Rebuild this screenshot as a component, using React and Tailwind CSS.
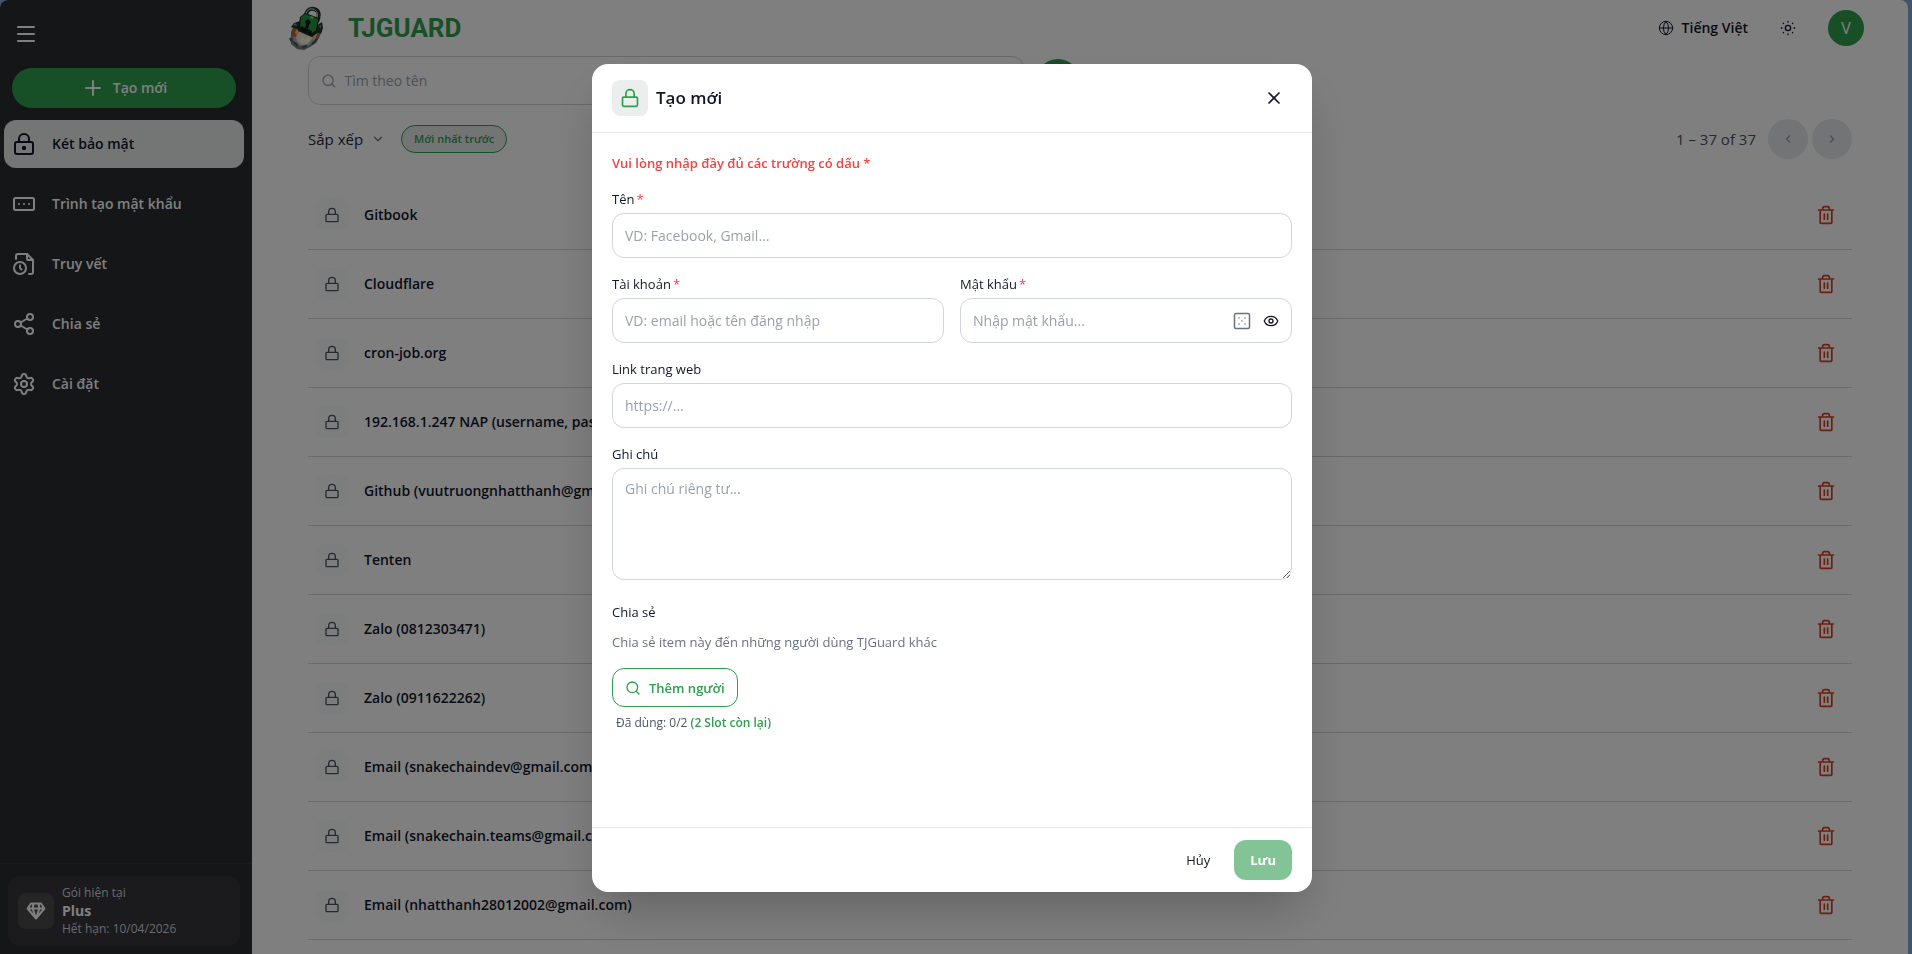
import { useState } from 'react'
import {
  ChevronDown,
  ChevronLeft,
  ChevronRight,
  Eye,
  Globe,
  Menu,
  Plus,
  Search,
  Settings,
  X,
} from 'lucide-react'

const ITEMS = [
  'Gitbook',
  'Cloudflare',
  'cron-job.org',
  '192.168.1.247 NAP (username, password)',
  'Github (vuutruongnhatthanh@gmail.com)',
  'Tenten',
  'Zalo (0812303471)',
  'Zalo (0911622262)',
  'Email (snakechaindev@gmail.com)',
  'Email (snakechain.teams@gmail.com)',
  'Email (nhatthanh28012002@gmail.com)',
]

const NAV = [
  { label: 'Két bảo mật', icon: VaultIcon, active: true },
  { label: 'Trình tạo mật khẩu', icon: PasswordIcon },
  { label: 'Truy vết', icon: HistoryIcon },
  { label: 'Chia sẻ', icon: ShareIcon },
  { label: 'Cài đặt', icon: Settings },
]

function Icon({ size = 24, stroke = 2, className, children }) {
  return (
    <svg
      width={size}
      height={size}
      viewBox="0 0 24 24"
      fill="none"
      stroke="currentColor"
      strokeWidth={stroke}
      strokeLinecap="round"
      strokeLinejoin="round"
      className={className}
      aria-hidden="true"
    >
      {children}
    </svg>
  )
}

function VaultIcon() {
  return (
    <Icon>
      <rect x="3" y="10" width="18" height="12" rx="2" />
      <path d="M7 10V7a5 5 0 0 1 10 0v3" />
      <circle cx="12" cy="16" r="1.2" fill="currentColor" />
    </Icon>
  )
}

function PasswordIcon() {
  return (
    <Icon>
      <rect x="2" y="6" width="20" height="12" rx="1.5" />
      <path d="M7 12h.01M12 12h.01M17 12h.01" />
    </Icon>
  )
}

function HistoryIcon() {
  return (
    <Icon>
      <path d="M4 7V4a2 2 0 0 1 2-2h9l6 6v12a2 2 0 0 1-2 2h-2" />
      <path d="M15 2v5a1 1 0 0 0 1 1h5" />
      <circle cx="8" cy="16" r="6" />
      <path d="M8 13.500V16l1.500 1.500" />
    </Icon>
  )
}

function ShareIcon() {
  return (
    <Icon>
      <circle cx="18" cy="5" r="3" />
      <circle cx="6" cy="12" r="3" />
      <circle cx="18" cy="19" r="3" />
      <path d="m8.600 13.500 6.800 4M15.400 6.500l-6.800 4" />
    </Icon>
  )
}

function LockIcon({ size = 18, stroke = 2 }) {
  return (
    <Icon size={size} stroke={stroke}>
      <rect x="3" y="11" width="18" height="11" rx="1.5" />
      <path d="M7 11V7a5 5 0 0 1 10 0v4" />
    </Icon>
  )
}

function TrashIcon() {
  return (
    <Icon size={20}>
      <path d="M3 6h18M5 6v15a1 1 0 0 0 1 1h12a1 1 0 0 0 1-1V6M8 6V4a2 2 0 0 1 2-2h4a2 2 0 0 1 2 2v2M10 11v6M14 11v6" />
    </Icon>
  )
}

function SunIcon() {
  return (
    <Icon size={16}>
      <circle cx="12" cy="12" r="4" />
      <path d="M12 2v1M12 21v1M2 12h1M21 12h1M4.900 4.900l.5.5M18.600 18.600l.5.5M4.900 19.100l.5-.5M18.600 5.400l.5-.5" />
    </Icon>
  )
}

function DiceIcon() {
  return (
    <Icon size={18}>
      <rect x="2" y="2" width="20" height="20" rx="2" />
      <path d="M8 8h.01M16 8h.01M12 12h.01M8 16h.01M16 16h.01" />
    </Icon>
  )
}

function DiamondIcon() {
  return (
    <Icon size={20} stroke={2.5}>
      <path d="M6 3h12l4 6-10 12L2 9zM2 9h20M9 3 8 9l4 12 4-12-1-6" />
    </Icon>
  )
}

function Logo() {
  return (
    <svg width="36" height="44" viewBox="0 0 36 44" aria-hidden="true">
      <path d="M3 26 6 19l7-3 16 5 5 3-3 8-3 5-6 4-6 3-7-1-6-5z" fill="#6f7d80" />
      <path d="m5 29 3-8 6 1 13 7 4-3-4 9-8 6-9-1-4-4z" fill="#a8b1ad" />
      <path d="m8 30 4-5 4 3 5 2 4 2-5 6-7 1-4-4z" fill="#e8e3cc" />
      <path d="m4 30 3-11 4 3-3 9zM26 33l4-10 3 1-5 10z" fill="#d05a25" />
      <path d="m7 27 2-5 3 3-3 5zM24 33l3-6 2 1-2 6z" fill="#f4b27a" />
      <path d="m12 35 3-6 2 5 4-4 1 5-5 3z" fill="#f8f4df" />
      <path d="m6 36 4 4M14 41l5-1M24 38l5-5M2 32l2 4" stroke="#4a5654" strokeWidth="2" />
      <path d="m3 21 3-4 6-2-1 9-5-2zM28 20l6-4 1 6-2 6-5-2z" fill="#25342f" />
      <path d="m5 19 3-2 1 3zM31 20l2-1v4z" fill="#7d8f88" />
      <path d="M18 14c-1-9 3-12 8-11s6 6 3 13" fill="none" stroke="#26332f" strokeWidth="4" />
      <path d="M18 13c-1-8 3-11 7-10s6 6 3 12" fill="none" stroke="#dce2e2" strokeWidth="1" />
      <path d="m12 11 5-4 14 5-2 15-5 4-14-6z" fill="#16291f" />
      <path d="m13 11 4-3 13 5-2 11-4 3-12-5z" fill="#259745" />
      <path d="m17 15 3-2 3 3-2 3-1 4-3-1 1-4z" fill="#151a1a" />
      <path d="m12 23 11 6 1-4-11-5z" fill="#121a18" />
      <path d="m23 10 3 1-1 2-3-1z" fill="#6fdd66" />
    </svg>
  )
}

function Sidebar() {
  return (
    <aside className="flex w-[252px] shrink-0 flex-col bg-[#2b2c2f] text-white">
      <div className="flex flex-col pt-6 pr-4 pl-3">
        <button type="button" aria-label="Menu" className="flex h-5 w-7 items-center justify-center">
          <Menu size={24} />
        </button>
        <button
          type="button"
          className="mt-6 flex h-10 items-center justify-center gap-2 rounded-full bg-[#2f9e4f] text-sm font-semibold"
        >
          <Plus size={24} />
          Tạo mới
        </button>
      </div>
      <nav className="mt-3 flex flex-col gap-3 pr-2 pl-1">
        {NAV.map(({ label, icon: NavIcon, active }) => (
          <a
            key={label}
            href="#"
            className={
              active
                ? 'flex h-12 items-center gap-4 rounded-xl bg-[#e8ecec] px-2 text-sm font-semibold text-slate-900'
                : 'flex h-12 items-center gap-4 rounded-xl px-2 text-sm font-semibold'
            }
          >
            <NavIcon />
            {label}
          </a>
        ))}
      </nav>
      <div className="mt-auto border-t border-white/5 pt-3 pr-3 pb-2 pl-2">
        <div className="flex h-[70px] items-center gap-2 rounded-xl bg-[#363438] px-2.5">
          <span className="flex size-9 items-center justify-center rounded-lg bg-[#4a4a4c]">
            <DiamondIcon />
          </span>
          <div className="text-xs/[18px] text-gray-300">
            <p>Gói hiện tại</p>
            <p className="text-sm/[18px] font-bold text-white">Plus</p>
            <p>Hết hạn: 10/04/2026</p>
          </div>
        </div>
      </div>
    </aside>
  )
}

function Header() {
  return (
    <header className="flex h-14 shrink-0 items-center justify-between pr-11 pl-9">
      <div className="flex items-center gap-6">
        <Logo />
        <span className="font-[Roboto] text-[26px] font-bold text-[#2f9e4f]">TJGUARD</span>
      </div>
      <div className="flex items-center gap-8 text-slate-900">
        <button type="button" className="flex items-center gap-2 text-sm font-semibold">
          <Globe size={16} strokeWidth={1.5} />
          Tiếng Việt
        </button>
        <button type="button" aria-label="Giao diện">
          <SunIcon />
        </button>
        <button
          type="button"
          className="flex size-9 items-center justify-center rounded-full bg-[#2f9e4f] text-base text-white"
        >
          V
        </button>
      </div>
    </header>
  )
}

function Vault() {
  return (
    <main className="px-14">
      <div className="flex items-center gap-3">
        <label className="flex h-[49px] w-[716px] items-center gap-2 rounded-xl border border-gray-300 px-3 text-gray-400">
          <Search size={16} />
          <input
            type="text"
            aria-label="Tìm theo tên"
            placeholder="Tìm theo tên"
            className="w-full text-sm outline-none placeholder:text-gray-400"
          />
        </label>
        <button
          type="button"
          aria-label="Tìm kiếm"
          className="flex size-11 items-center justify-center rounded-full bg-[#2f9e4f] text-white"
        >
          <Search size={18} />
        </button>
      </div>

      <div className="mt-3 flex h-11 items-center justify-between">
        <div className="flex items-center gap-4">
          <button type="button" className="flex items-center gap-2 text-[15px] text-gray-800">
            Sắp xếp
            <ChevronDown size={14} className="text-gray-500" />
          </button>
          <button
            type="button"
            className="h-7 rounded-full border border-[#2f9e4f] bg-[#e6ebe9] px-3 text-[11px] font-semibold text-[#2f9e4f]"
          >
            Mới nhất trước
          </button>
        </div>
        <div className="flex items-center gap-1">
          <span className="mr-2 text-[15px] text-gray-600">1 – 37 of 37</span>
          <button
            type="button"
            aria-label="Trang trước"
            className="flex size-10 items-center justify-center rounded-full bg-[#e6e9ea] text-gray-400"
          >
            <ChevronLeft size={12} strokeWidth={3} />
          </button>
          <button
            type="button"
            aria-label="Trang sau"
            className="flex size-10 items-center justify-center rounded-full bg-[#e6e9ea] text-gray-400"
          >
            <ChevronRight size={12} strokeWidth={3} />
          </button>
        </div>
      </div>

      <ul className="mt-5">
        {ITEMS.map((name) => (
          <li key={name} className="flex h-[69px] items-center border-b border-gray-300 px-2">
            <span className="flex size-8 items-center justify-center rounded-lg bg-[#f9fafb] text-gray-600">
              <LockIcon size={16} />
            </span>
            <a href="#" className="ml-4 grow text-sm font-semibold text-slate-900">
              {name}
            </a>
            <button type="button" aria-label={`Xóa ${name}`} className="mr-2 text-[#d63f20]">
              <TrashIcon />
            </button>
          </li>
        ))}
      </ul>
    </main>
  )
}

const inputClass =
  'h-[45px] w-full rounded-xl border border-gray-300 px-3 text-sm text-gray-900 outline-none placeholder:text-gray-400'

function Field({ id, label, required, children }) {
  return (
    <div className="flex flex-col gap-1">
      <label htmlFor={id} className="text-[13px]/5 text-gray-900">
        {label}
        {required && <span className="ml-0.5 text-[#ef4444]">*</span>}
      </label>
      {children}
    </div>
  )
}

function CreateModal({ onClose }) {
  const [form, setForm] = useState({ name: '', account: '', password: '', link: '', note: '' })
  const [visible, setVisible] = useState(false)

  const update = (field) => (e) => setForm((f) => ({ ...f, [field]: e.target.value }))

  return (
    <div className="fixed inset-0 flex items-center justify-center bg-black/50 pt-0.5 pr-2">
      <form
        role="dialog"
        aria-label="Tạo mới"
        onSubmit={(e) => e.preventDefault()}
        className="flex h-[828px] w-[720px] flex-col rounded-2xl bg-white shadow-2xl"
      >
        <div className="flex h-[69px] shrink-0 items-center justify-between border-b border-gray-200 px-5">
          <div className="flex items-center gap-2">
            <span className="flex size-9 items-center justify-center rounded-lg bg-[#eaeeed] text-[#2f9e4f]">
              <LockIcon size={20} />
            </span>
            <h2 className="text-[17px] font-semibold text-gray-900">Tạo mới</h2>
          </div>
          <button
            type="button"
            aria-label="Đóng"
            onClick={onClose}
            className="flex size-9 items-center justify-center text-gray-900"
          >
            <X size={20} />
          </button>
        </div>

        <div className="flex grow flex-col gap-4 p-5">
          <p className="text-[13px]/5 font-semibold text-[#ef4444]">
            Vui lòng nhập đầy đủ các trường có dấu *
          </p>
          <Field id="name" label="Tên" required>
            <input
              id="name"
              type="text"
              value={form.name}
              onChange={update('name')}
              placeholder="VD: Facebook, Gmail..."
              className={inputClass}
            />
          </Field>
          <div className="grid grid-cols-2 gap-4">
            <Field id="account" label="Tài khoản" required>
              <input
                id="account"
                type="text"
                value={form.account}
                onChange={update('account')}
                placeholder="VD: email hoặc tên đăng nhập"
                className={inputClass}
              />
            </Field>
            <Field id="password" label="Mật khẩu" required>
              <div className="flex h-[45px] items-center gap-3 rounded-xl border border-gray-300 px-3">
                <input
                  id="password"
                  type={visible ? 'text' : 'password'}
                  value={form.password}
                  onChange={update('password')}
                  placeholder="Nhập mật khẩu..."
                  className="min-w-0 grow text-sm outline-none placeholder:text-gray-400"
                />
                <button type="button" aria-label="Tạo mật khẩu" className="text-gray-500">
                  <DiceIcon />
                </button>
                <button
                  type="button"
                  aria-label="Hiện mật khẩu"
                  onClick={() => setVisible((v) => !v)}
                  className="text-gray-900"
                >
                  <Eye size={16} />
                </button>
              </div>
            </Field>
          </div>
          <Field id="link" label="Link trang web">
            <input
              id="link"
              type="text"
              value={form.link}
              onChange={update('link')}
              placeholder="https://..."
              className={inputClass}
            />
          </Field>
          <Field id="note" label="Ghi chú">
            <textarea
              id="note"
              value={form.note}
              onChange={update('note')}
              placeholder="Ghi chú riêng tư..."
              className="h-28 w-full rounded-xl border border-gray-300 px-3 py-2.5 text-sm outline-none placeholder:text-gray-400"
            />
          </Field>

          <section className="mt-1.5 flex flex-col items-start">
            <h3 className="text-[13px]/5 text-gray-900">Chia sẻ</h3>
            <p className="mt-2.5 text-[13px]/5 text-gray-500">
              Chia sẻ item này đến những người dùng TJGuard khác
            </p>
            <button
              type="button"
              className="mt-4 flex h-[39px] items-center gap-2 rounded-xl border border-[#2f9e4f] px-3 text-[13px]/5 font-semibold text-[#2f9e4f]"
            >
              <Search size={16} />
              Thêm người
            </button>
            <p className="mt-2 ml-1 text-xs text-gray-600">
              Đã dùng: 0/2 <span className="font-semibold text-[#2f9e4f]">(2 Slot còn lại)</span>
            </p>
          </section>
        </div>

        <div className="flex h-[65px] shrink-0 items-center justify-end gap-2 border-t border-gray-200 px-5">
          <button type="button" onClick={onClose} className="h-10 px-4 text-[13px]/5 text-gray-900">
            Hủy
          </button>
          <button
            type="submit"
            className="h-10 rounded-xl bg-[#82c495] px-4 text-[13px]/5 font-bold text-white"
          >
            Lưu
          </button>
        </div>
      </form>
    </div>
  )
}

export default function App() {
  const [open, setOpen] = useState(true)

  return (
    <div className="h-screen overflow-hidden bg-[#7fabdc] pr-1 font-['Open_Sans',sans-serif]">
      <div className="flex h-full overflow-hidden rounded-t-lg bg-white">
        <Sidebar />
        <div className="min-w-0 grow">
          <Header />
          <Vault />
        </div>
      </div>
      {open && <CreateModal onClose={() => setOpen(false)} />}
    </div>
  )
}
